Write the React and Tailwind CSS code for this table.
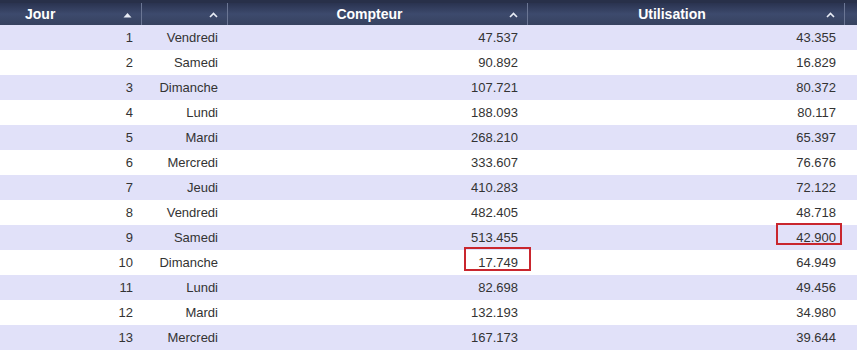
import React from 'react';

const rows = [
  [1, 'Vendredi', '47.537', '43.355'],
  [2, 'Samedi', '90.892', '16.829'],
  [3, 'Dimanche', '107.721', '80.372'],
  [4, 'Lundi', '188.093', '80.117'],
  [5, 'Mardi', '268.210', '65.397'],
  [6, 'Mercredi', '333.607', '76.676'],
  [7, 'Jeudi', '410.283', '72.122'],
  [8, 'Vendredi', '482.405', '48.718'],
  [9, 'Samedi', '513.455', '42.900'],
  [10, 'Dimanche', '17.749', '64.949'],
  [11, 'Lundi', '82.698', '49.456'],
  [12, 'Mardi', '132.193', '34.980'],
  [13, 'Mercredi', '167.173', '39.644'],
];

const cols = 'grid grid-cols-[142px_86px_300px_317px_12px]';

function Chevron() {
  return (
    <svg width="9" height="6" viewBox="0 0 9 6" className="shrink-0">
      <path d="M1 5 L4.5 1.5 L8 5" fill="none" stroke="#e8ecf5" strokeWidth="1.6" />
    </svg>
  );
}

function Triangle() {
  return (
    <svg width="9" height="6" viewBox="0 0 9 6" className="shrink-0">
      <path d="M0.5 5.5 L4.5 1 L8.5 5.5 Z" fill="#e8ecf5" />
    </svg>
  );
}

function HeadCell({ label, icon, pad, last }) {
  return (
    <div className={`relative flex items-center h-full ${last ? '' : 'border-r border-[#6b7694]'}`}>
      <span className={`flex-1 ${pad}`}>{label}</span>
      {icon && <span className="absolute right-[9px] top-[9px] flex">{icon}</span>}
    </div>
  );
}

export default function App() {
  return (
    <div className="w-[857px] h-[350px] overflow-hidden bg-white font-['Liberation_Sans',Arial,sans-serif] text-[13px] text-[#333]">
      <div className={`${cols} h-[25px] bg-gradient-to-b from-[#2a3350] via-[#3d4a6d] to-[#36425f] border-t-[3px] border-[#283049] text-white font-bold text-[14px]`}>
        <HeadCell label="Jour" pad="pl-[25px]" icon={<Triangle />} />
        <HeadCell label="" icon={<Chevron />} />
        <HeadCell label="Compteur" pad="text-center pr-[16px]" icon={<Chevron />} />
        <HeadCell label="Utilisation" pad="text-center pr-[28px]" icon={<Chevron />} />
        <div />
      </div>
      {rows.map(([n, day, compteur, util], i) => (
        <div
          key={n}
          className={`${cols} h-[25px] items-center ${i % 2 === 0 ? 'bg-[#e1e1f9]' : 'bg-white'}`}
        >
          <div className="text-right pr-[9px]">{n}</div>
          <div className="text-right pr-[10px]">{day}</div>
          <div className="relative text-right pr-[10px]">
            {compteur}
            {n === 10 && (
              <span className="absolute left-[236px] top-[-6px] w-[67px] h-[24px] border-2 border-[#c9262e]" />
            )}
          </div>
          <div className="relative text-right pr-[9px]">
            {util}
            {n === 9 && (
              <span className="absolute left-[248px] top-[-5px] w-[66px] h-[22px] border-2 border-[#c9262e]" />
            )}
          </div>
          <div />
        </div>
      ))}
    </div>
  );
}
